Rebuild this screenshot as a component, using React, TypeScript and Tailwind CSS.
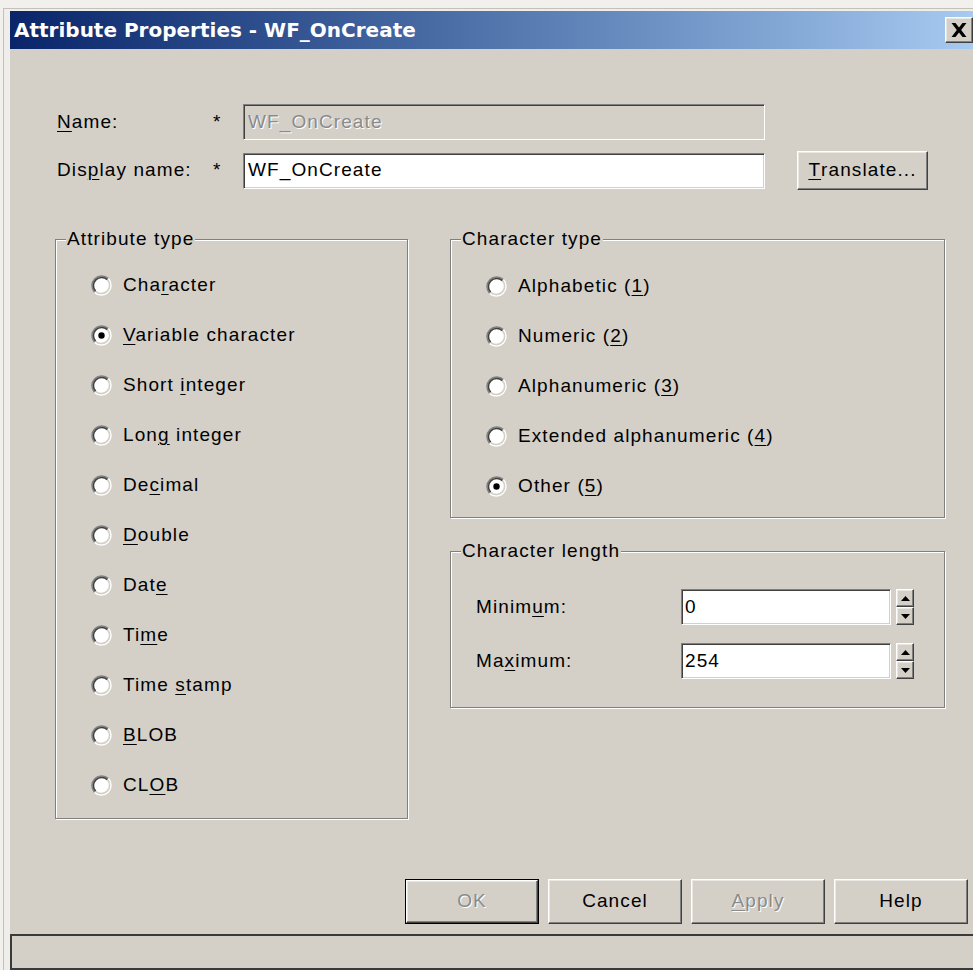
import React from "react";

const FACE = "font-['Liberation_Sans',Arial,sans-serif] text-[19px] tracking-[1.1px] text-black";
const RAISED =
  "bg-[#d4d0c8] border border-t-white border-l-white border-b-[#404040] border-r-[#404040] shadow-[inset_-1px_-1px_0_#808080,inset_1px_1px_0_#e9e7e2]";
const SUNKEN =
  "border border-t-[#808080] border-l-[#808080] border-b-white border-r-white shadow-[inset_1px_1px_0_#404040,inset_-1px_-1px_0_#d4d0c8]";
const DISABLED_TEXT = "text-[#8a8a8a] [text-shadow:1px_1px_0_#ffffff]";

// "&" marks the access-key letter, as in a Win32 resource string
function Mnemonic({ text }: { text: string }) {
  const i = text.indexOf("&");
  if (i < 0) return <>{text}</>;
  return (
    <>
      {text.slice(0, i)}
      <span className="underline decoration-1 underline-offset-[3px]">{text[i + 1]}</span>
      {text.slice(i + 2)}
    </>
  );
}

function RadioGlyph({ checked }: { checked?: boolean }) {
  return (
    <svg width="21" height="21" viewBox="0 0 21 21" className="shrink-0">
      <circle cx="10.5" cy="10.5" r="8" fill="#ffffff" />
      <path d="M3.61 17.39 A9.75 9.75 0 0 1 17.39 3.61" fill="none" stroke="#808080" strokeWidth="1.5" />
      <path d="M17.39 3.61 A9.75 9.75 0 0 1 3.61 17.39" fill="none" stroke="#ffffff" strokeWidth="1.5" />
      <path d="M4.67 16.33 A8.25 8.25 0 0 1 16.33 4.67" fill="none" stroke="#404040" strokeWidth="1.5" />
      <path d="M16.33 4.67 A8.25 8.25 0 0 1 4.67 16.33" fill="none" stroke="#d4d0c8" strokeWidth="1.5" />
      {checked && <circle cx="10.5" cy="10.5" r="3.2" fill="#000000" />}
    </svg>
  );
}

function RadioRow({ label, checked }: { label: string; checked?: boolean }) {
  return (
    <div className="flex h-[50px] items-center gap-[11px]">
      <RadioGlyph checked={checked} />
      <span className="whitespace-nowrap">
        <Mnemonic text={label} />
      </span>
    </div>
  );
}

function GroupBox({
  title,
  className,
  children,
}: {
  title: string;
  className: string;
  children: React.ReactNode;
}) {
  return (
    <div
      className={`relative border border-[#808080] shadow-[inset_1px_1px_0_#ffffff,1px_1px_0_#ffffff] ${className}`}
    >
      <span className="absolute left-[10px] top-[-13px] bg-[#d4d0c8] px-[1px] leading-[24px] whitespace-nowrap">
        {title}
      </span>
      {children}
    </div>
  );
}

function SpinArrow({ up }: { up?: boolean }) {
  return (
    <div className={`flex h-[18px] w-[18px] items-center justify-center ${RAISED}`}>
      <svg width="9" height="5" viewBox="0 0 9 5">
        <path d={up ? "M0 5 L4.5 0 L9 5Z" : "M0 0 L4.5 5 L9 0Z"} fill="#000000" />
      </svg>
    </div>
  );
}

function PushButton({
  label,
  disabled,
  isDefault,
  className = "",
}: {
  label: string;
  disabled?: boolean;
  isDefault?: boolean;
  className?: string;
}) {
  const face = (
    <div
      className={`flex h-full w-full items-center justify-center ${RAISED} ${disabled ? DISABLED_TEXT : ""}`}
    >
      <Mnemonic text={label} />
    </div>
  );
  return isDefault ? (
    <div className={`border border-black ${className}`}>{face}</div>
  ) : (
    <div className={className}>{face}</div>
  );
}

const ATTRIBUTE_TYPES = [
  "Cha&racter",
  "&Variable character",
  "Short &integer",
  "Lon&g integer",
  "De&cimal",
  "&Double",
  "Dat&e",
  "Ti&me",
  "Time &stamp",
  "&BLOB",
  "CL&OB",
];

const CHARACTER_TYPES = [
  "Alphabetic (&1)",
  "Numeric (&2)",
  "Alphanumeric (&3)",
  "Extended alphanumeric (&4)",
  "Other (&5)",
];

export default function App() {
  return (
    <div className={`h-[970px] w-[973px] overflow-hidden bg-[#f1f0ed] pl-[3px] pt-[8px] ${FACE}`}>
      <div className="flex h-full flex-col border-l border-t border-[#c4c1ba] bg-[#efeeea] pl-[6px] pt-[2px]">
        {/* caption */}
        <div className="flex h-[38px] shrink-0 items-center justify-between bg-linear-to-r from-[#0a246a] to-[#a6caf0] pl-[4px]">
          <span className="font-['DejaVu_Sans',Verdana,sans-serif] text-[20px] font-bold tracking-normal text-white">
            Attribute Properties - WF_OnCreate
          </span>
          <div className={`flex h-[26px] w-[28px] items-center justify-center ${RAISED}`}>
            <svg width="16" height="14" viewBox="0 0 16 14">
              <path
                d="M0.5 0 L4.5 0 L8 4.6 L11.5 0 L15.5 0 L10.2 7 L15.5 14 L11.5 14 L8 9.4 L4.5 14 L0.5 14 L5.8 7Z"
                fill="#000000"
              />
            </svg>
          </div>
        </div>

        {/* dialog body */}
        <div className="flex flex-1 flex-col bg-[#d4d0c8] pt-[55px]">
          <div className="flex h-[36px] items-center">
            <span className="ml-[47px] w-[156px]">
              <Mnemonic text="&Name:" />
            </span>
            <span className="w-[30px]">*</span>
            <div className={`flex h-[36px] w-[522px] items-center bg-[#d4d0c8] pl-[4px] ${SUNKEN} ${DISABLED_TEXT}`}>
              WF_OnCreate
            </div>
          </div>

          <div className="mt-[11px] flex h-[39px] items-center">
            <span className="ml-[47px] w-[156px]">
              <Mnemonic text="Dis&play name:" />
            </span>
            <span className="w-[30px]">*</span>
            <div className={`flex h-[36px] w-[522px] items-center bg-white pl-[4px] ${SUNKEN}`}>WF_OnCreate</div>
            <PushButton label="&Translate..." className="ml-[32px] h-[39px] w-[131px]" />
          </div>

          <div className="mt-[49px] flex">
            <GroupBox title="Attribute type" className="ml-[45px] h-[580px] w-[353px] pl-[35px] pt-[20px]">
              {ATTRIBUTE_TYPES.map((t) => (
                <RadioRow key={t} label={t} checked={t === "&Variable character"} />
              ))}
            </GroupBox>

            <div className="ml-[42px] flex w-[495px] flex-col">
              <GroupBox title="Character type" className="h-[279px] pl-[35px] pt-[21px]">
                {CHARACTER_TYPES.map((t) => (
                  <RadioRow key={t} label={t} checked={t === "Other (&5)"} />
                ))}
              </GroupBox>

              <GroupBox title="Character length" className="mt-[33px] h-[157px] pl-[25px] pt-[37px]">
                <div className="flex flex-col gap-[18px]">
                  {[
                    ["Minim&um:", "0"],
                    ["Ma&ximum:", "254"],
                  ].map(([label, value]) => (
                    <div key={label} className="flex h-[36px] items-center">
                      <span className="w-[205px]">
                        <Mnemonic text={label} />
                      </span>
                      <div className={`flex h-[36px] w-[210px] items-center bg-white pl-[3px] ${SUNKEN}`}>
                        {value}
                      </div>
                      <div className="ml-[5px] flex flex-col">
                        <SpinArrow up />
                        <SpinArrow />
                      </div>
                    </div>
                  ))}
                </div>
              </GroupBox>
            </div>
          </div>

          <div className="mt-[60px] flex h-[45px] justify-end gap-[9px] pr-[5px]">
            <PushButton label="OK" disabled isDefault className="w-[134px]" />
            <PushButton label="Cancel" className="w-[134px]" />
            <PushButton label="&Apply" disabled className="w-[134px]" />
            <PushButton label="Help" className="w-[134px]" />
          </div>

          <div className="mt-[10px] h-[36px] border-2 border-r-0 border-[#3a3a3a] bg-[#d4d0c8]" />
        </div>
      </div>
    </div>
  );
}
